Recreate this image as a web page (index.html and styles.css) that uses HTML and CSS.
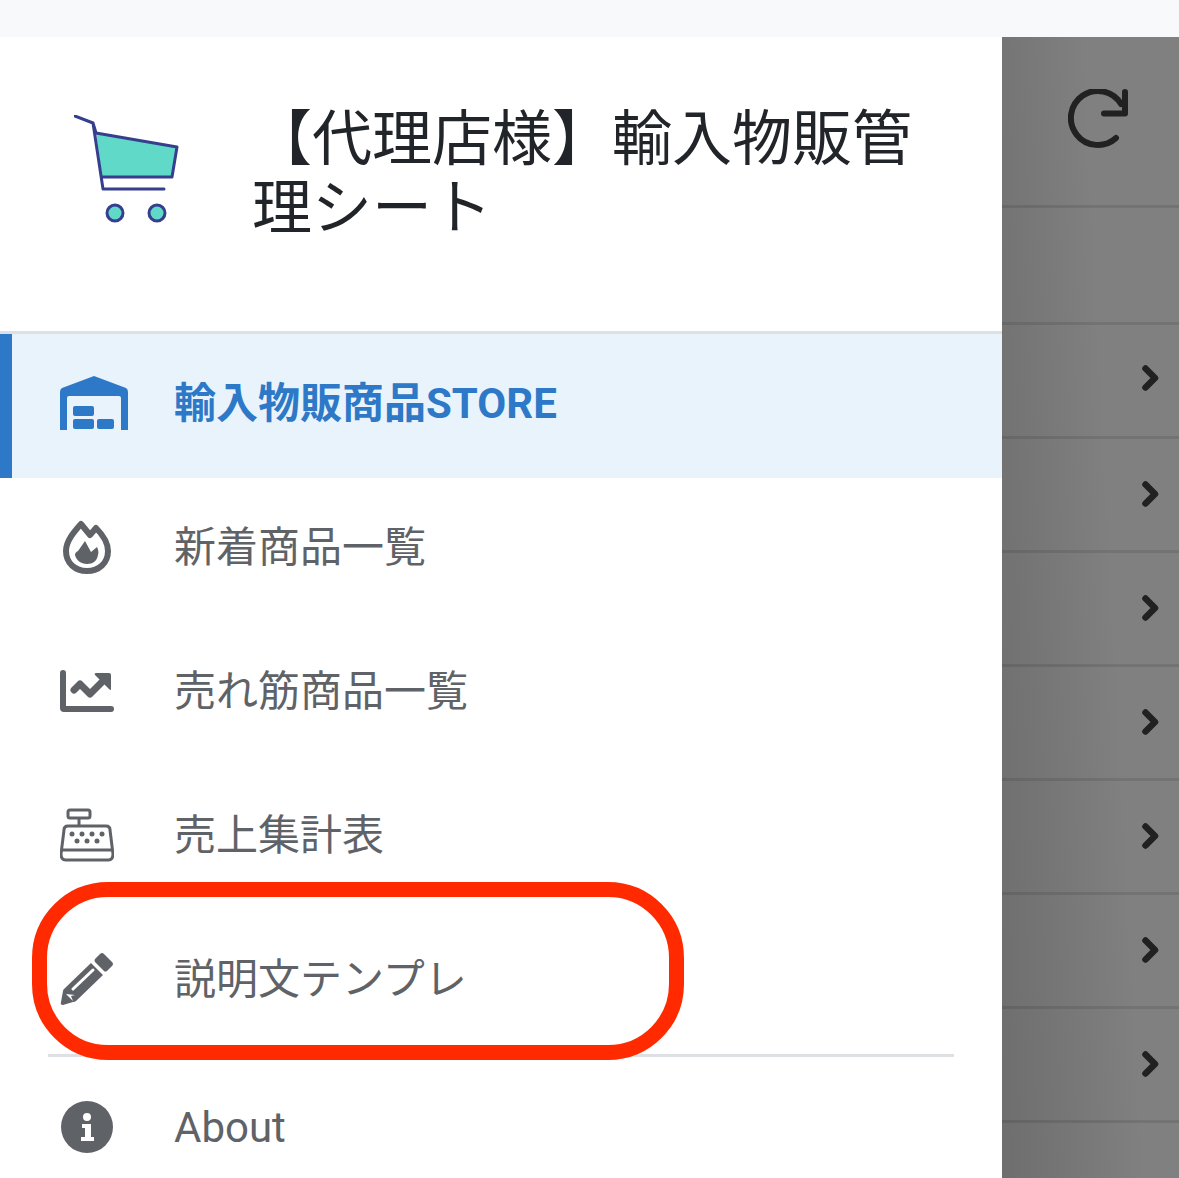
FILE: index.html
```html
<!DOCTYPE html>
<html lang="ja">
<head>
<meta charset="utf-8">
<title>輸入物販管理シート</title>
<link rel="stylesheet" href="styles.css">
</head>
<body>
<div class="topbar"></div>
<div class="screen">
  <aside class="drawer">
    <header class="brand">
      <svg class="cart" viewBox="0 0 106 108" width="106" height="108">
        <path d="M22 18 L103 32 L98 62 L28 62 Z" fill="#60d9c8"/>
        <path d="M1 1 L19 8 L22 18 M22 18 L103 32 L98 62 L28 62 M19 8 L29 74 L90 74" fill="none" stroke="#363f8d" stroke-width="3" stroke-linecap="round" stroke-linejoin="round"/>
        <circle cx="41" cy="98" r="8" fill="#60d9c8" stroke="#363f8d" stroke-width="3"/>
        <circle cx="83" cy="98" r="8" fill="#60d9c8" stroke="#363f8d" stroke-width="3"/>
      </svg>
      <h1 class="title">【代理店様】輸入物販管理シート</h1>
    </header>
    <nav class="menu">
      <a class="item active">
        <svg class="icon" viewBox="0 0 68 54" width="68" height="54"><path fill="#2d79c7" d="M34 0 L66 12 Q68 13 68 16 V54 H61 V22 Q61 20 59 20 H9 Q7 20 7 22 V54 H0 V16 Q0 13 2 12 Z"/><rect x="13" y="30" width="21" height="10" rx="2" fill="#2d79c7"/><rect x="13" y="43" width="21" height="10" rx="2" fill="#2d79c7"/><rect x="37" y="43" width="17" height="10" rx="2" fill="#2d79c7"/></svg>
        <span>輸入物販商品STORE</span>
      </a>
      <a class="item">
        <svg class="icon icon-flame" viewBox="0 0 48 54" width="48" height="54"><path fill="none" stroke="#5f6368" stroke-width="6" stroke-linejoin="round" d="M18 4 L27 15 L33 8 C39 14 45 23 45 31 C45 43 36 51 24 51 C12 51 3 43 3 31 C3 21 11 12 18 4 Z"/><path fill="#5f6368" d="M15 31 L22 21 L28 32 L34 27 C35 29 36 32 35 35 C34 41 30 44 24 44 C18 44 13 40 12 35 C12 33 13 32 15 31 Z"/></svg>
        <span>新着商品一覧</span>
      </a>
      <a class="item">
        <svg class="icon" viewBox="0 0 54 42" width="54" height="42"><path fill="none" stroke="#5f6368" stroke-width="6" stroke-linecap="round" stroke-linejoin="round" d="M3 3 V38 Q3 39 4 39 H51"/><path fill="none" stroke="#5f6368" stroke-width="7" stroke-linecap="round" stroke-linejoin="round" d="M14 20 L20 14 L30 24 L45 9"/><path fill="#5f6368" d="M36 3 H49 Q51 3 51 5 V19 Q51 21 49 19 L35 5 Q34 3 36 3 Z"/></svg>
        <span>売れ筋商品一覧</span>
      </a>
      <a class="item">
        <svg class="icon" viewBox="0 0 54 54" width="54" height="54"><rect x="8" y="2" width="22" height="8" rx="2" fill="none" stroke="#5f6368" stroke-width="3"/><path d="M19 10 V18" stroke="#5f6368" stroke-width="3"/><path fill="none" stroke="#5f6368" stroke-width="3" stroke-linejoin="round" d="M8 18 H46 Q50 18 50 22 L53 46 Q53 52 48 52 H6 Q1 52 1 46 L4 22 Q4 18 8 18 Z M2 42 H52"/><g fill="#5f6368"><circle cx="12" cy="26" r="2.5"/><circle cx="22" cy="26" r="2.5"/><circle cx="32" cy="26" r="2.5"/><circle cx="42" cy="26" r="2.5"/><circle cx="17" cy="33" r="2.5"/><circle cx="27" cy="33" r="2.5"/><circle cx="37" cy="33" r="2.5"/></g></svg>
        <span>売上集計表</span>
      </a>
      <a class="item">
        <svg class="icon" viewBox="0 0 54 54" width="54" height="54"><path fill="#5f6368" d="M40 2 Q42 0 44 2 L52 10 Q54 12 52 14 L47 19 Q45 20 44 19 L35 10 Q34 8 35 7 Z"/><path fill="#5f6368" d="M31 11 L43 23 L16 49 Q15 50 13 50 L3 53 Q0 53 1 50 L3 39 Q3 38 4 37 Z"/><path fill="none" stroke="#fff" stroke-width="3" stroke-linecap="round" d="M13 37 L33 18"/><path fill="#fff" d="M6 42 L13 49 L11 44 L15 43 Z"/></svg>
        <span>説明文テンプレ</span>
      </a>
      <div class="divider"></div>
      <a class="item about">
        <svg class="icon icon-info" viewBox="0 0 52 52" width="52" height="52"><circle cx="26" cy="26" r="26" fill="#5f6368"/><circle cx="26" cy="16" r="4" fill="#fff"/><path fill="#fff" d="M21 23 H30 V36 H33 V40 H20 V36 H24 V27 H21 Z"/></svg>
        <span>About</span>
      </a>
      <div class="ring"></div>
    </nav>
  </aside>
  <section class="scrim">
    <div class="row head">
      <svg class="reload" viewBox="0 0 60 60" width="60" height="60"><path fill="none" stroke="#212121" stroke-width="6" stroke-linecap="round" stroke-linejoin="round" d="M48 49 A27 27 0 1 1 53 15"/><path fill="none" stroke="#212121" stroke-width="6" stroke-linecap="round" stroke-linejoin="round" d="M57 3 V24.500 H36"/></svg>
    </div>
    <div class="row blank"></div>
    <div class="row first"><svg class="chev" viewBox="0 0 17 26" width="17" height="26"><path d="M3.500 3.500 L13 13 L3.500 22.500" fill="none" stroke="#212121" stroke-width="6.500" stroke-linecap="round" stroke-linejoin="round"/></svg></div>
    <div class="row"><svg class="chev" viewBox="0 0 17 26" width="17" height="26"><path d="M3.500 3.500 L13 13 L3.500 22.500" fill="none" stroke="#212121" stroke-width="6.500" stroke-linecap="round" stroke-linejoin="round"/></svg></div>
    <div class="row"><svg class="chev" viewBox="0 0 17 26" width="17" height="26"><path d="M3.500 3.500 L13 13 L3.500 22.500" fill="none" stroke="#212121" stroke-width="6.500" stroke-linecap="round" stroke-linejoin="round"/></svg></div>
    <div class="row"><svg class="chev" viewBox="0 0 17 26" width="17" height="26"><path d="M3.500 3.500 L13 13 L3.500 22.500" fill="none" stroke="#212121" stroke-width="6.500" stroke-linecap="round" stroke-linejoin="round"/></svg></div>
    <div class="row"><svg class="chev" viewBox="0 0 17 26" width="17" height="26"><path d="M3.500 3.500 L13 13 L3.500 22.500" fill="none" stroke="#212121" stroke-width="6.500" stroke-linecap="round" stroke-linejoin="round"/></svg></div>
    <div class="row"><svg class="chev" viewBox="0 0 17 26" width="17" height="26"><path d="M3.500 3.500 L13 13 L3.500 22.500" fill="none" stroke="#212121" stroke-width="6.500" stroke-linecap="round" stroke-linejoin="round"/></svg></div>
    <div class="row"><svg class="chev" viewBox="0 0 17 26" width="17" height="26"><path d="M3.500 3.500 L13 13 L3.500 22.500" fill="none" stroke="#212121" stroke-width="6.500" stroke-linecap="round" stroke-linejoin="round"/></svg></div>
  </section>
</div>
</body>
</html>
```
FILE: styles.css
```css
html, body {
  margin: 0;
  padding: 0;
  height: 1178px;
  overflow: hidden;
  background: #fff;
  font-family: Roboto, "Noto Sans CJK JP", sans-serif;
}
.topbar {
  height: 37px;
  background: #f8f9fa;
}
.screen {
  display: flex;
  height: 1141px;
  overflow: hidden;
}
.drawer {
  width: 1002px;
  flex: none;
  background: #fff;
  display: flex;
  flex-direction: column;
}
.brand {
  flex: none;
  height: 294px;
  display: flex;
  align-items: flex-start;
  border-bottom: 3px solid #dee1e4;
  padding-left: 74px;
}
.cart {
  margin-top: 78px;
  flex: none;
}
.title {
  margin: 68px 78px 0 72px;
  font-size: 60px;
  font-weight: 400;
  line-height: 69px;
  color: #212529;
}
.menu {
  position: relative;
  display: flex;
  flex-direction: column;
  flex: none;
}
.item {
  flex: none;
  height: 144px;
  box-sizing: border-box;
  display: flex;
  align-items: center;
  font-size: 42px;
  color: #5f6368;
  position: relative;
  padding: 0 0 14px 174px;
}
.icon {
  position: absolute;
  left: 60px;
  top: 50%;
  transform: translateY(-50%);
  margin-top: -3px;
}
.icon-flame {
  left: 63px;
}
.icon-info {
  left: 61px;
  margin-top: -2px;
}
.active {
  background: #e9f3fb;
  color: #2d79c7;
  font-weight: 700;
  box-shadow: inset 12px 0 0 #2d79c7;
}
.divider {
  flex: none;
  height: 3px;
  margin: 0 48px;
  background: #dee1e4;
}
.about {
  padding-bottom: 4px;
}
.ring {
  position: absolute;
  left: 32px;
  top: 548px;
  width: 652px;
  height: 178px;
  box-sizing: border-box;
  border: 15px solid #ff2a00;
  border-radius: 76px;
}
.scrim {
  flex: 1;
  background: linear-gradient(87deg, #6e6e6e, #757575 25%, #808080 60%);
  display: flex;
  flex-direction: column;
}
.row {
  height: 114px;
  box-sizing: border-box;
  flex: none;
  border-bottom: 3px solid rgba(0, 0, 0, 0.1);
  display: flex;
  align-items: center;
  justify-content: flex-end;
  padding: 0 20px 2px 0;
}
.head {
  height: 171px;
  align-items: flex-start;
  justify-content: flex-start;
  padding: 52px 0 0 66px;
}
.blank {
  height: 117px;
}
.first {
  padding-bottom: 6px;
}
```
